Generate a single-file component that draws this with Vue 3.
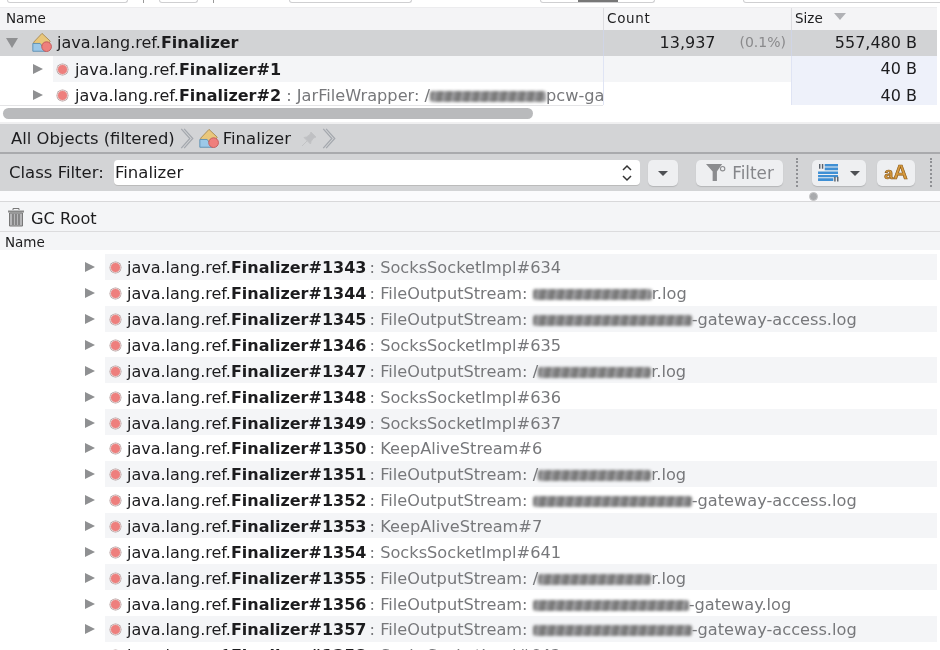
<script setup>
const rows = [
  { n: 1343, type: 'SocksSocketImpl#634' },
  { n: 1344, type: 'FileOutputStream: ', blurW: 119, tail: 'r.log' },
  { n: 1345, type: 'FileOutputStream: ', blurW: 159, tail: '-gateway-access.log' },
  { n: 1346, type: 'SocksSocketImpl#635' },
  { n: 1347, type: 'FileOutputStream: /', blurW: 113, tail: 'r.log' },
  { n: 1348, type: 'SocksSocketImpl#636' },
  { n: 1349, type: 'SocksSocketImpl#637' },
  { n: 1350, type: 'KeepAliveStream#6' },
  { n: 1351, type: 'FileOutputStream: /', blurW: 113, tail: 'r.log' },
  { n: 1352, type: 'FileOutputStream: ', blurW: 159, tail: '-gateway-access.log' },
  { n: 1353, type: 'KeepAliveStream#7' },
  { n: 1354, type: 'SocksSocketImpl#641' },
  { n: 1355, type: 'FileOutputStream: /', blurW: 113, tail: 'r.log' },
  { n: 1356, type: 'FileOutputStream: ', blurW: 156, tail: '-gateway.log' },
  { n: 1357, type: 'FileOutputStream: ', blurW: 159, tail: '-gateway-access.log' },
  { n: 1358, type: 'SocksSocketImpl#642' }
]
</script>

<template>
  <div class="page">
    <div class="top-strip">
      <span class="cut w1"></span><i class="tick"></i><span class="cut w2"></span><i class="tick"></i>
      <span class="cut w3"></span><span class="cut seg"><b></b></span><span class="cut w4"></span>
    </div>

    <div class="tbl-head">
      <div class="th">Name</div>
      <div class="th ruled count-th">Count</div>
      <div class="th ruled">Size <span class="sort"></span></div>
    </div>

    <div class="tbl-row selected">
      <div class="name-cell root">
        <span class="arrow down"></span>
        <svg class="cls" viewBox="0 0 24 24"><path d="M12 1.5 21 10 14 20H3V11Z" fill="#e9c77b" stroke="#a98a52"/><path d="M2 12.5 10 12.5 16 21H2Z" fill="#9cc8e8" stroke="#5c8eb2"/><circle cx="17" cy="16" r="5.3" fill="#ef7f7c" stroke="#c05a5a"/></svg>
        <span class="label">java.lang.ref.<b>Finalizer</b></span>
      </div>
      <div class="num ruled-cell"><span>13,937</span><span class="pct">(0.1%)</span></div>
      <div class="size ruled-cell">557,480 B</div>
    </div>

    <div class="tbl-row">
      <div class="name-cell child">
        <span class="arrow"></span>
        <div class="name-fill grey">
          <span class="ball"></span><span class="label">java.lang.ref.<b>Finalizer#1</b></span>
        </div>
      </div>
      <div class="ruled-cell grey"></div>
      <div class="size ruled-cell tint">40 B</div>
    </div>

    <div class="tbl-row short">
      <div class="name-cell child">
        <span class="arrow"></span>
        <div class="name-fill">
          <span class="ball"></span><span class="label">java.lang.ref.<b>Finalizer#2</b></span>
          <span class="detail">&nbsp;: JarFileWrapper: /<span class="redact" style="width:116px"></span>pcw-ga</span>
        </div>
      </div>
      <div class="ruled-cell"></div>
      <div class="size ruled-cell tint">40 B</div>
    </div>

    <div class="scroll-track"><div class="thumb"></div></div>

    <div class="crumbs">
      <span>All Objects (filtered)</span>
      <svg class="chev" viewBox="0 0 14 24"><path d="M1 2 10 12 1 22M4 2 13 12 4 22" fill="none" stroke="#a4a8ae" stroke-width="1.3"/></svg>
      <svg class="cls small" viewBox="0 0 24 24"><path d="M12 1.5 21 10 14 20H3V11Z" fill="#e9c77b" stroke="#a98a52"/><path d="M2 12.5 10 12.5 16 21H2Z" fill="#9cc8e8" stroke="#5c8eb2"/><circle cx="17" cy="16" r="5.3" fill="#ef7f7c" stroke="#c05a5a"/></svg>
      <span class="crumb-name">Finalizer</span>
      <svg class="pin" viewBox="0 0 18 18"><path d="M11 2 16 7 13.5 8 11 11.5 10.5 14 4 7.5 6.5 7 10 4.5ZM7 11 2 16" fill="#bfc0c3" stroke="#c2c3c5"/></svg>
      <svg class="chev last" viewBox="0 0 14 24"><path d="M1 2 10 12 1 22M4 2 13 12 4 22" fill="none" stroke="#a4a8ae" stroke-width="1.3"/></svg>
    </div>

    <div class="filter-bar">
      <span class="filter-label">Class Filter:</span>
      <div class="input">
        <span>Finalizer</span>
        <svg class="stepper" viewBox="0 0 12 20"><path d="M2 7 6 3 10 7M2 13 6 17 10 13" fill="none" stroke="#333" stroke-width="1.5"/></svg>
      </div>
      <div class="btn drop"><span class="caret"></span></div>
      <div class="btn filter">
        <svg class="funnel" viewBox="0 0 22 20"><path d="M1 1H18L12.5 9V19H8V9Z" fill="#8b8c8f"/><circle cx="18.5" cy="6" r="2.3" fill="none" stroke="#8b8c8f" stroke-width="1.2"/></svg>
        <span>Filter</span>
      </div>
      <i class="dots"></i>
      <div class="btn view">
        <svg class="viewicon" viewBox="0 0 22 20"><path d="M7 1H21V3.8H7ZM7 4.8H21V7.6H7ZM0 9H21V11.5H0ZM0 12.5H21V15H0ZM0 16H16V19H0Z" fill="#3f8fd4"/><path d="M1 1H2.5V6H1ZM4 1H5.5V6H4ZM17 14.5H18.5V19.5H17ZM20 14.5H21.5V19.5H20Z" fill="#58606a"/></svg>
        <span class="caret"></span>
      </div>
      <div class="btn case"><span class="a-low">a</span><span class="a-up">A</span></div>
      <i class="dots"></i>
    </div>

    <div class="knob-strip"><span class="knob"></span></div>

    <div class="gc-head">
      <svg class="trash" viewBox="0 0 18 20"><path d="M6 3V1.5H12V3" fill="none" stroke="#777"/><path d="M1 3.5H17V5.5H1Z" fill="#888"/><path d="M2.5 6H15.5V19H2.5Z" fill="#b6b6b8" stroke="#777"/><path d="M6 7V18M9 7V18M12 7V18" stroke="#666" stroke-width="1.2"/></svg>
      <span>GC Root</span>
    </div>
    <div class="name-head">Name</div>

    <div class="list">
      <div v-for="r in rows" :key="r.n" class="lrow">
        <span class="arrow"></span>
        <div class="lfill">
          <span class="ball"></span>
          <span class="label">java.lang.ref.<b>Finalizer#{{ r.n }}</b></span>
          <span class="detail shift">&nbsp;: {{ r.type }}<span v-if="r.blurW" class="redact" :style="{ width: r.blurW + 'px' }"></span>{{ r.tail }}</span>
        </div>
      </div>
    </div>
  </div>
</template>

<style>
html, body { margin: 0; background: #fff; overflow: hidden; }
</style>

<style scoped>
.page {
  width: 940px; height: 650px; overflow: hidden; background: #fff;
  font-family: "DejaVu Sans", sans-serif; font-size: 15px; color: #1c1c1e;
  filter: blur(0.4px);
}
.top-strip { height: 7px; display: flex; align-items: flex-start; overflow: hidden; background: #fff; }
.cut { display: block; flex: none; height: 3px; background: #fff; border: 1px solid #cfcfd1; border-top: 0; border-radius: 0 0 5px 5px; box-sizing: border-box; }
.w1 { width: 121px; margin-left: 7px; }
.w2 { width: 39px; margin-left: 15px; }
.w3 { width: 123px; margin-left: 15px; }
.seg { width: 115px; margin-left: 128px; display: flex; justify-content: center; }
.seg b { width: 40px; height: 100%; background: #777; }
.w4 { width: 210px; margin-left: 88px; }
.tick { flex: none; width: 1px; height: 3px; margin-left: 15px; background: #999; }
.tick:nth-of-type(2) + .cut { margin-left: 75px; }

.tbl-head { height: 23px; margin-right: 3px; display: grid; grid-template-columns: 603px 188px 146px; background: #f4f4f6; box-sizing: border-box; border-top: 1px solid #ececee; font-size: 13.5px; line-height: 20px; }
.th { padding-left: 6px; }
.th.ruled { padding-left: 3px; border-left: 1px solid #dcdce0; }
.count-th { letter-spacing: .7px; }
.sort { display: inline-block; margin-left: 7px; vertical-align: 3px; border: 6px solid transparent; border-top: 7px solid #b0b1b5; border-bottom: 0; }

.tbl-row { height: 26px; margin-right: 3px; display: grid; grid-template-columns: 603px 188px 146px; grid-template-rows: 26px; font-size: 16px; line-height: 25px; }
.tbl-row.short { height: 23px; overflow: hidden; }
.tbl-row.short .size { line-height: 27px; }
.tbl-row.selected { background: #d2d3d5; }
.name-cell { display: flex; align-items: center; overflow: hidden; white-space: nowrap; min-width: 0; }
.root { padding-left: 6px; padding-bottom: 1px; box-sizing: border-box; }
.child { padding-left: 33px; }
.name-fill { flex: 1; height: 100%; display: flex; align-items: center; padding-left: 4px; margin-left: 10px; min-width: 0; overflow: hidden; }
.grey { background: #f4f5f7; }
.tint { background: #eef1fa; }
.ruled-cell { border-left: 1px solid #dfe4f4; box-sizing: border-box; }
.selected .ruled-cell { border-left-color: #d0d5e6; }
.num { display: flex; justify-content: flex-end; padding-right: 5px; gap: 24px; }
.pct { color: #8a8a8c; font-size: 14px; }
.size { text-align: right; padding-right: 20px; }

.arrow { flex: none; width: 0; height: 0; border-left: 10px solid #8f9092; border-top: 5.5px solid transparent; border-bottom: 5.5px solid transparent; }
.arrow.down { border: 6px solid transparent; border-top: 10px solid #8f9092; border-bottom: 0; margin-right: 13px; }
.cls { width: 22px; height: 22px; flex: none; margin-right: 4px; }
.cls.small { margin: 0 3px 0 4px; }
.ball { flex: none; box-sizing: border-box; width: 11px; height: 11px; border-radius: 50%; background: #ee7f7d; border: 1.5px solid #e6d2d2; box-shadow: 0 0 0 .5px #b09c9c; margin-right: 7px; }
.label b { font-weight: 700; }
.detail { color: #77787b; font-size: 16.2px; white-space: pre; }
.detail.shift { margin-left: -2px; }
.redact { display: inline-block; height: 11px; vertical-align: -1px; background: repeating-linear-gradient(100deg, #777 0 4px, #a6a6a8 4px 6px, #8a8a8c 6px 9px); border-radius: 3px; filter: blur(1.4px); }

.scroll-track { height: 17px; width: 603px; background: #fff; box-sizing: border-box; padding: 2px 70px 0 3px; border-top: 1px solid #e4e4e6; }
.thumb { height: 11px; border-radius: 6px; background: #b9babc; }

.crumbs { height: 32px; display: flex; align-items: center; padding: 1px 0 0 11px; background: #d3d4d6; border-top: 2px solid #f0f0f1; border-bottom: 2px solid #a9aaad; box-sizing: border-box; font-size: 16.4px; }
.chev { flex: none; width: 14px; height: 23px; margin-left: 5px; }
.crumb-name { font-size: 16.5px; }
.pin { flex: none; width: 18px; height: 18px; margin-left: 9px; }
.chev.last { margin-left: 4px; }

.filter-bar { height: 37px; display: flex; align-items: center; padding-left: 9px; background: #d3d4d6; box-sizing: border-box; font-size: 16.5px; }
.filter-label { width: 105px; flex: none; }
.input { width: 526px; height: 25px; flex: none; display: flex; align-items: center; justify-content: space-between; background: #fff; padding-left: 1px; box-sizing: border-box; border-radius: 4px; box-shadow: 0 1px 0 #bbb; }
.stepper { width: 12px; height: 20px; margin-right: 7px; }
.btn { height: 26px; flex: none; display: flex; align-items: center; justify-content: center; box-sizing: border-box; background: #eeeff1; border-radius: 5px; box-shadow: 0 1px 1px #b5b6b8; }
.caret { width: 0; height: 0; border: 5px solid transparent; border-top: 5px solid #4e5054; border-bottom: 0; margin-top: 2px; }
.drop { width: 30px; margin-left: 8px; }
.filter { width: 87px; margin-left: 18px; gap: 6px; color: #85868a; font-size: 16.8px; font-weight: 500; }
.funnel { width: 21px; height: 19px; }
.dots { flex: none; width: 0; height: 29px; border-left: 2px dotted #8f9094; }
.filter + .dots { margin-left: 13px; }
.view { width: 54px; margin-left: 14px; gap: 11px; }
.viewicon { width: 21px; height: 19px; }
.case { width: 38px; margin-left: 11px; margin-right: 15px; color: #d89b3f; font-family: "Liberation Sans", sans-serif; font-weight: 700; align-items: baseline; line-height: 24px; -webkit-text-stroke: .7px #8c5a17; }
.a-low { font-size: 16px; }
.a-up { font-size: 20px; }

.knob-strip { height: 11px; background: #fbfbfd; border-bottom: 1px solid #d8d8da; display: flex; align-items: center; box-sizing: border-box; padding-left: 809px; }
.knob { width: 7px; height: 7px; border-radius: 50%; background: #a9aaad; border: 1px solid #c6c6c8; }

.gc-head { height: 30px; display: flex; align-items: center; gap: 6px; padding: 3px 0 0 7px; background: #f4f5f7; box-sizing: border-box; font-size: 16.2px; border-bottom: 1px solid #dcdcde; }
.trash { width: 18px; height: 20px; margin-top: -3px; }
.name-head { height: 18px; padding-left: 5px; background: #f4f5f7; font-size: 13.5px; line-height: 20px; }

.list { display: grid; grid-auto-rows: 25.86px; margin-top: 4px; font-size: 16px; }
.lrow { display: flex; align-items: center; padding-left: 85px; white-space: nowrap; }
.lrow .arrow { margin-top: 1px; }
.lfill { flex: 1; height: 100%; box-sizing: border-box; display: flex; align-items: center; margin-left: 10px; margin-right: 3px; padding: 2px 0 0 5px; min-width: 0; }
.lfill .ball { margin-right: 6px; }
.lrow:nth-child(odd) .lfill { background: #f4f5f7; }
</style>
